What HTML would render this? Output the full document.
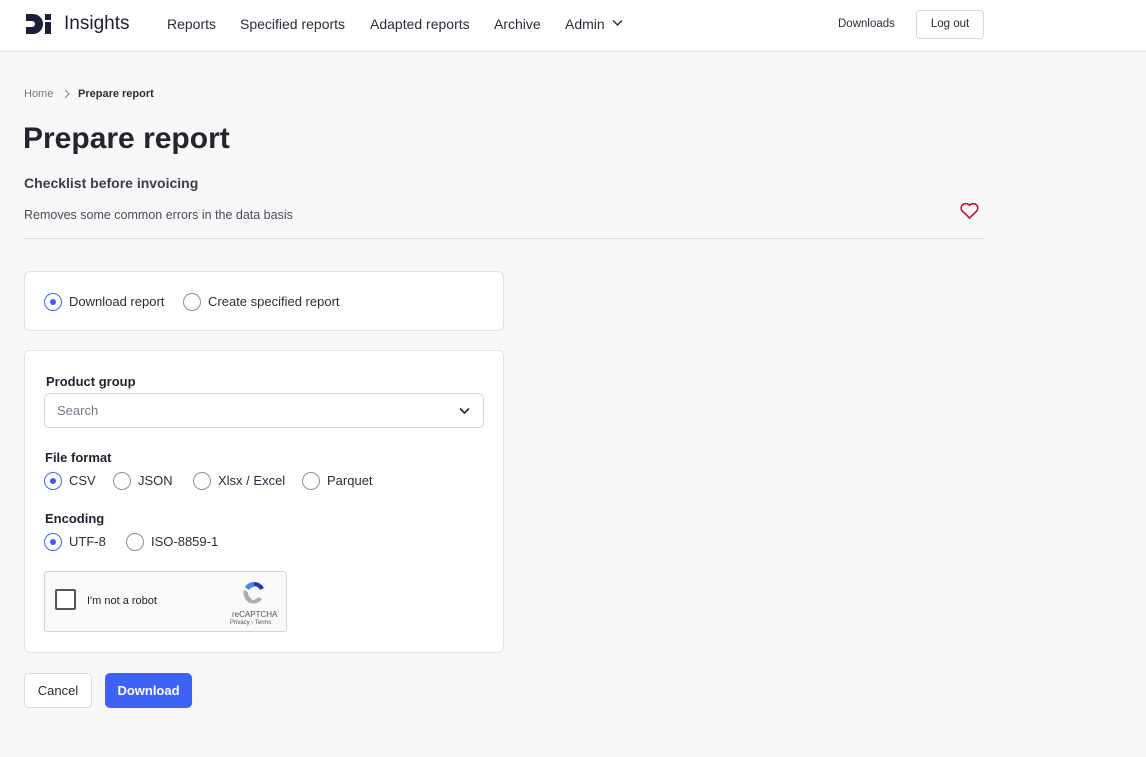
<!DOCTYPE html>
<html><head><style>
*{box-sizing:border-box;margin:0;padding:0}
body{width:1146px;height:757px;background:#f8f8f9;font-family:"Liberation Sans",sans-serif;color:#23262f;position:relative;overflow:hidden}
.hdr{position:absolute;left:0;top:0;width:1146px;height:52px;background:#fff;border-bottom:1px solid #e3e3e8}
.abs{position:absolute;white-space:nowrap}
.nav{font-size:14px;top:16px;color:#2b2e3a}
.card{position:absolute;background:#fff;border:1px solid #e1e1e8;border-radius:6px}
.radio{position:absolute;width:18px;height:18px;border:1.5px solid #8a8ea0;border-radius:50%;background:#fff}
.radio.on{border-color:#4a66f5}
.radio.on::after{content:"";position:absolute;left:4.5px;top:4.5px;width:6px;height:6px;border-radius:50%;background:#3d5af1}
.t14{font-size:13px;color:#2b2e3a}
.lbl{font-size:13px;font-weight:bold;color:#1f2230}
</style></head><body>
<div class="hdr">
  <svg class="abs" style="left:26px;top:12px" width="28" height="24" viewBox="0 0 28 24"><path d="M0 2h7a10 10 0 0 1 0 20H0v-7h6a3 3 0 0 0 0-6H0z" fill="#1c1f3a"/><rect x="19" y="10" width="6" height="12" fill="#1c1f3a"/><rect x="19" y="2" width="6" height="6" fill="#1c1f3a"/></svg>
  <div class="abs" style="left:64px;top:13px;font-size:19px;color:#1c1f3a">Insights</div>
  <div class="abs nav" style="left:167px">Reports</div>
  <div class="abs nav" style="left:240px">Specified reports</div>
  <div class="abs nav" style="left:370px">Adapted reports</div>
  <div class="abs nav" style="left:494px">Archive</div>
  <div class="abs nav" style="left:565px">Admin</div>
  <svg class="abs" style="left:612px;top:19px" width="11" height="8" viewBox="0 0 11 8"><path d="M1 1.5l4.5 4.5 4.5-4.5" stroke="#2b2e3a" stroke-width="1.4" fill="none"/></svg>
  <div class="abs" style="left:838px;top:18px;font-size:11.5px;color:#2b2e3a">Downloads</div>
  <div class="abs" style="left:916px;top:10px;width:68px;height:29px;border:1px solid #d8d8de;border-radius:4px;font-size:11.5px;text-align:center;line-height:27px">Log out</div>
</div>
<div class="abs" style="left:24px;top:88px;font-size:11px;color:#767a88">Home</div>
<svg class="abs" style="left:63px;top:89px" width="8" height="10" viewBox="0 0 8 10"><path d="M2 1l4 4-4 4" stroke="#8a8ea0" stroke-width="1.2" fill="none"/></svg>
<div class="abs" style="left:78px;top:88px;font-size:11px;font-weight:bold;color:#2b2e3a">Prepare report</div>
<div class="abs" style="left:23px;top:122px;font-size:30px;font-weight:bold;color:#23262f">Prepare report</div>
<div class="abs" style="left:24px;top:175px;font-size:14px;font-weight:bold;color:#3a3d4a">Checklist before invoicing</div>
<div class="abs" style="left:24px;top:208px;font-size:12.5px;color:#4a4d5a">Removes some common errors in the data basis</div>
<svg class="abs" style="left:960px;top:203px" width="19" height="16" viewBox="0 0 19 16"><path d="M9.5 15L2.2 8A4.3 4.3 0 0 1 9.5 2.3 4.3 4.3 0 0 1 16.8 8z" stroke="#c8102e" stroke-width="1.6" fill="none"/></svg>
<div class="abs" style="left:24px;top:238px;width:960px;height:1px;background:#dcdce2"></div>

<div class="card" style="left:24px;top:271px;width:480px;height:60px"></div>
<div class="radio on" style="left:44px;top:293px"></div>
<div class="abs t14" style="left:69px;top:294px">Download report</div>
<div class="radio" style="left:183px;top:293px"></div>
<div class="abs t14" style="left:208px;top:294px">Create specified report</div>

<div class="card" style="left:24px;top:350px;width:480px;height:303px"></div>
<div class="abs lbl" style="left:46px;top:374px">Product group</div>
<div class="abs" style="left:44px;top:393px;width:440px;height:35px;background:#fff;border:1px solid #d8d8e0;border-radius:5px"></div>
<div class="abs" style="left:57px;top:403px;font-size:13px;color:#767a88">Search</div>
<svg class="abs" style="left:459px;top:407px" width="11" height="8" viewBox="0 0 11 8"><path d="M1 1.5l4.5 4.5 4.5-4.5" stroke="#23262f" stroke-width="1.6" fill="none"/></svg>
<div class="abs lbl" style="left:45px;top:450px">File format</div>
<div class="radio on" style="left:44px;top:472px"></div><div class="abs t14" style="left:69px;top:473px">CSV</div>
<div class="radio" style="left:113px;top:472px"></div><div class="abs t14" style="left:138px;top:473px">JSON</div>
<div class="radio" style="left:193px;top:472px"></div><div class="abs t14" style="left:218px;top:473px">Xlsx / Excel</div>
<div class="radio" style="left:302px;top:472px"></div><div class="abs t14" style="left:327px;top:473px">Parquet</div>
<div class="abs lbl" style="left:45px;top:511px">Encoding</div>
<div class="radio on" style="left:44px;top:533px"></div><div class="abs t14" style="left:69px;top:534px">UTF-8</div>
<div class="radio" style="left:126px;top:533px"></div><div class="abs t14" style="left:151px;top:534px">ISO-8859-1</div>

<div class="abs" style="left:44px;top:571px;width:243px;height:61px;background:#f9f9f9;border:1px solid #d3d3d3;border-radius:3px"></div>
<div class="abs" style="left:55px;top:589px;width:21px;height:21px;background:#fff;border:2px solid #555;border-radius:2px"></div>
<div class="abs" style="left:87px;top:595px;font-size:11px;color:#222">I'm not a robot</div>
<svg class="abs" style="left:241px;top:580px" width="26" height="26" viewBox="0 0 26 26"><path d="M13 2a11 11 0 0 1 10 6l-4 2a7 7 0 0 0-6-4z" fill="#1c3aa9"/><path d="M13 2a11 11 0 0 0-9 5l4 3a6 6 0 0 1 5-3z" fill="#4285f4"/><path d="M3 10a11 11 0 0 0 6 13l2-4a7 7 0 0 1-4-7z" fill="#ababab"/><path d="M9 23a11 11 0 0 0 12-4l-4-2a7 7 0 0 1-6 3z" fill="#ababab"/></svg>
<div class="abs" style="left:232px;top:610px;font-size:8px;color:#555">reCAPTCHA</div>
<div class="abs" style="left:230px;top:620px;font-size:6px;color:#555">Privacy - Terms</div>

<div class="abs" style="left:24px;top:673px;width:68px;height:35px;background:#fff;border:1px solid #dcdce2;border-radius:5px;font-size:13px;text-align:center;line-height:33px;color:#2b2e3a">Cancel</div>
<div class="abs" style="left:105px;top:673px;width:87px;height:35px;background:#3d63f6;border-radius:5px;font-size:13px;font-weight:bold;text-align:center;line-height:35px;color:#fff">Download</div>
</body></html>
